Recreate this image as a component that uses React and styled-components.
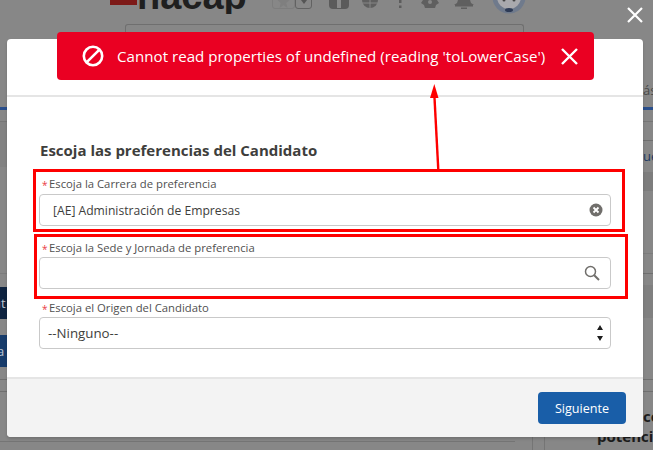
import React from "react";
import styled, { createGlobalStyle } from "styled-components";

const GlobalStyle = createGlobalStyle`
  html, body { margin: 0; padding: 0; background: #878787; }
  * { box-sizing: border-box; }
`;

const Page = styled.div`
  position: relative;
  width: 653px;
  height: 450px;
  overflow: hidden;
  background: #878787;
  font-family: "Open Sans", "Liberation Sans", sans-serif;
`;

// app behind the dimmed overlay
const Backdrop = styled.div`
  display: flex;
  flex-direction: column;
  height: 100%;
`;

const TopBar = styled.div`
  display: flex;
  align-items: flex-end;
  height: 14px;
  padding-left: 110px;
  overflow: hidden;
`;

const LogoMark = styled.div`
  flex: none;
  width: 27px;
  height: 5px;
  margin-bottom: 9px;
  background: #7d1a18;
`;

const LogoText = styled.div`
  flex: none;
  width: 108px;
  font-family: "Liberation Sans", sans-serif;
  font-weight: 700;
  font-size: 38px;
  line-height: 30px;
  height: 30px;
  margin-bottom: 3px;
  color: #1f1f1f;
`;

const FavGroup = styled.div`
  display: flex;
  margin: 0 0 5px 27px;
`;

const FavBox = styled.div`
  width: ${(p) => p.$w}px;
  height: 14px;
  border: 1px solid ${(p) => p.$line};
  border-radius: 0 0 3px 3px;
  display: flex;
  align-items: center;
  justify-content: center;
`;

const TopIcons = styled.svg`
  display: block;
  margin-left: 17px;
`;

const SearchBar = styled.div`
  flex: none;
  width: 399px;
  height: 20px;
  margin: 10px 0 0 125px;
  border: 1px solid #6f6f6f;
  border-bottom: 0;
  border-radius: 3px 3px 0 0;
`;

const BackBody = styled.div`
  flex: 1;
  display: flex;
  justify-content: space-between;
  margin-top: -4px;
  min-height: 0;
`;

const Strip = styled.div`
  width: ${(p) => p.$w}px;
  display: flex;
  flex-direction: column;
  overflow: hidden;
`;

const StripRow = styled.div`
  flex: none;
  height: ${(p) => p.$h}px;
  background: ${(p) => p.$bg || "transparent"};
  border-bottom: ${(p) => (p.$line ? `1px solid ${p.$line}` : "0")};
  color: ${(p) => p.$color || "#4a4a4a"};
  font-size: 13px;
  line-height: ${(p) => p.$lh || p.$h}px;
  padding-left: ${(p) => p.$pad || 0}px;
  margin-left: ${(p) => p.$shift || 0}px;
  white-space: nowrap;
`;

const BottomHeading = styled.div`
  font-weight: 700;
  font-size: 15px;
  line-height: 20px;
  color: #1c1c1c;
  white-space: nowrap;
  padding-top: 14px;
`;

const HeadingIndent = styled.div`
  padding-left: 46px;
`;

const BottomRule = styled.div`
  position: absolute;
  left: 0;
  top: 441px;
  width: 515px;
  height: 1px;
  background: #757575;
`;

const BottomColumn = styled.div`
  position: absolute;
  top: 437px;
  left: ${(p) => p.$x}px;
  width: 1px;
  height: 13px;
  background: #757575;
`;

const CloseOverlay = styled.svg`
  position: absolute;
  top: 7px;
  left: 627px;
`;

const Modal = styled.div`
  position: absolute;
  left: 7px;
  top: 39px;
  width: 636px;
  height: 398px;
  display: flex;
  flex-direction: column;
  background: #fff;
  border-radius: 4px;
  overflow: hidden;
  box-shadow: 0 2px 3px rgba(0, 0, 0, 0.16);
`;

const ModalHead = styled.div`
  flex: none;
  height: 58px;
  border-bottom: 2px solid #e5e5e5;
`;

const ModalBody = styled.div`
  flex: 1;
  padding: 43px 32px 0 32px;
`;

const Title = styled.h2`
  margin: 0 0 16px;
  padding-left: 1px;
  font-size: 15px;
  line-height: 20px;
  font-weight: 700;
  color: #3e3e3c;
`;

const Field = styled.div`
  margin-bottom: ${(p) => p.$after || 0}px;
`;

const Label = styled.div`
  display: flex;
  height: 18px;
  padding: ${(p) => p.$top ?? 1}px 0 0 3px;
  font-size: 11.3px;
  line-height: 16px;
  color: #505050;
`;

const Star = styled.span`
  width: 7px;
  font-size: 10px;
  padding-top: 1px;
  color: #ea3a44;
`;

const InputBox = styled.div`
  display: flex;
  align-items: center;
  justify-content: space-between;
  height: 32px;
  padding: 0 ${(p) => p.$right || 7}px 0 ${(p) => p.$left || 8}px;
  background: #fff;
  border: 1px solid #c9c9c9;
  border-radius: 4px;
  font-size: ${(p) => p.$size || 12.15}px;
  color: #3e3e3c;
`;

const ModalFoot = styled.div`
  flex: none;
  height: 60px;
  display: flex;
  align-items: flex-start;
  justify-content: flex-end;
  padding: 13px 17px 0 0;
  background: #f3f3f3;
  border-top: 2px solid #e5e5e5;
`;

const NextButton = styled.button`
  width: 88px;
  height: 32px;
  border: 0;
  border-radius: 4px;
  background: #195ea8;
  color: #fff;
  font-family: inherit;
  font-size: 12.6px;
`;

// error toast on top of the modal
const Toast = styled.div`
  position: absolute;
  left: 57px;
  top: 32px;
  width: 537px;
  height: 48px;
  display: flex;
  align-items: center;
  padding-left: 25px;
  background: #ea0022;
  border-radius: 4px;
  color: #fff;
  font-size: 15.1px;
  letter-spacing: 0.03px;
`;

const ToastText = styled.div`
  margin: 0 16px 0 13px;
  white-space: nowrap;
`;

// hand-drawn annotations over the screenshot
const RedBox = styled.div`
  position: absolute;
  left: ${(p) => p.$x}px;
  top: ${(p) => p.$y}px;
  width: ${(p) => p.$w}px;
  height: ${(p) => p.$h}px;
  border: 3px solid #fe0000;
`;

const Arrow = styled.svg`
  position: absolute;
  left: 424px;
  top: 80px;
`;

const App = () => {
  return (
    <Page>
      <GlobalStyle />
      <Backdrop>
        <TopBar>
          <LogoMark />
          <LogoText>nacap</LogoText>
          <FavGroup>
            <FavBox $w={23} $line="#7d7d7d">
              <svg width="13" height="12" viewBox="0 0 13 12"><path d="M6.5 -1l2 5h4l-3.2 3 1.2 5-4-2.8-4 2.8 1.2-5L.5 4h4z" fill="#7f7f7f" /></svg>
            </FavBox>
            <FavBox $w={17} $line="#626262">
              <svg width="8" height="6" viewBox="0 0 8 6"><path d="M1 1h6L4 5z" fill="#555" /></svg>
            </FavBox>
          </FavGroup>
          <TopIcons width="200" height="14" viewBox="0 0 200 14">
            <path d="M0 0h20v5a4 4 0 0 1-4 4H4a4 4 0 0 1-4-4z" fill="#5b5b5b" />
            <rect x="8" y="0" width="4" height="8" fill="#8a8a8a" />
            <path d="M33 0h16a8 8 0 0 1-16 0z" fill="#5f5f5f" />
            <path d="M41 0v8M33 3h16" stroke="#878787" strokeWidth="1" />
            <rect x="70" y="0" width="2.5" height="3" fill="#5c5c5c" />
            <rect x="70" y="5.5" width="2.5" height="2.5" fill="#5c5c5c" />
            <path d="M94 0h14l2 3-3 2-1 3h-10l-1-3-3-2z" fill="#5f5f5f" />
            <circle cx="101" cy="2" r="2" fill="#878787" />
            <path d="M129 0h12l1 3 3 2H125l3-2z" fill="#5f5f5f" />
            <rect x="126" y="5" width="18" height="1.5" fill="#5f5f5f" />
            <rect x="132" y="7.5" width="6" height="1.5" fill="#5f5f5f" />
            <circle cx="180" cy="-3" r="16.5" fill="#6f7a8c" />
            <circle cx="180" cy="-3" r="12" fill="#a9a9ad" />
            <ellipse cx="180" cy="10" rx="4" ry="2" fill="#2d3a55" />
            <circle cx="175" cy="0" r="1.5" fill="#444" />
            <circle cx="185" cy="0" r="1.5" fill="#444" />
          </TopIcons>
        </TopBar>
        <SearchBar />
        <BackBody>
          <Strip $w={7}>
            <StripRow $h={67} />
            <StripRow $h={3} $bg="#2a4f8c" />
            <StripRow $h={12} $line="#767676" />
            <StripRow $h={45} $bg="#828282" />
            <StripRow $h={107} $line="#7c7c7c" />
            <StripRow $h={13} />
            <StripRow $h={32} $bg="#0e2340" $color="#b9c2cf" $shift={-7}>ut</StripRow>
            <StripRow $h={16} />
            <StripRow $h={32} $bg="#173c6b" $color="#b9c2cf" $shift={-3}>a</StripRow>
            <StripRow $h={13} $line="#6f6f6f" />
            <StripRow $h={12} $line="#6f6f6f" />
          </Strip>
          <Strip $w={56}>
            <StripRow $h={67} $pad={46} $lh={100}>ás</StripRow>
            <StripRow $h={3} $bg="#2a4f8c" />
            <StripRow $h={12} $line="#767676" />
            <StripRow $h={19} $line="#6f6f6f" />
            <StripRow $h={31} $pad={46} $color="#203a63">ue</StripRow>
            <StripRow $h={19} $bg="#7d7d7d" />
            <StripRow $h={63} $line="#7c7c7c" />
            <StripRow $h={20} $line="#6f6f6f" />
            <StripRow $h={11} />
            <StripRow $h={33} $bg="#808080" />
            <StripRow $h={62} $line="#6f6f6f" />
            <StripRow $h={12} $line="#6f6f6f" />
            <BottomHeading>
              <HeadingIndent>con</HeadingIndent>
              potencial
            </BottomHeading>
          </Strip>
        </BackBody>
      </Backdrop>
      <BottomRule />
      <BottomColumn $x={532} />
      <BottomColumn $x={544} />

      <CloseOverlay width="16" height="16" viewBox="0 0 16 16">
        <path d="M1 1l14 14M15 1L1 15" stroke="#fff" strokeWidth="2.2" />
      </CloseOverlay>

      <Modal>
        <ModalHead />
        <ModalBody>
          <Title>Escoja las preferencias del Candidato</Title>
          <Field $after={13}>
            <Label $top={0}><Star>*</Star>Escoja la Carrera de preferencia</Label>
            <InputBox $left={13}>
              [AE] Administración de Empresas
              <svg width="14" height="14" viewBox="0 0 14 14">
                <circle cx="7" cy="7" r="6.5" fill="#706e6b" />
                <path d="M4.5 4.5l5 5M9.5 4.5l-5 5" stroke="#fff" strokeWidth="1.8" />
              </svg>
            </InputBox>
          </Field>
          <Field $after={10}>
            <Label><Star>*</Star>Escoja la Sede y Jornada de preferencia</Label>
            <InputBox $right={10}>
              <span />
              <svg width="16" height="16" viewBox="0 0 16 16" fill="none" stroke="#706e6b">
                <circle cx="6.5" cy="6.5" r="5" strokeWidth="1.5" />
                <path d="M10.2 10.2L15 15" strokeWidth="2" />
              </svg>
            </InputBox>
          </Field>
          <Field>
            <Label><Star>*</Star>Escoja el Origen del Candidato</Label>
            <InputBox $size={13.3}>
              --Ninguno--
              <svg width="6" height="16" viewBox="0 0 6 16">
                <path d="M3 0l3 5H0zM3 16l3-5H0z" fill="#1f1f1f" />
              </svg>
            </InputBox>
          </Field>
        </ModalBody>
        <ModalFoot>
          <NextButton>Siguiente</NextButton>
        </ModalFoot>
      </Modal>

      <RedBox $x={33} $y={169} $w={592} $h={63} />
      <RedBox $x={34} $y={234} $w={594} $h={65} />
      <Arrow width="24" height="92" viewBox="0 0 24 92">
        <path d="M10.3 4l4.2 14H6z" fill="#fe0000" />
        <path d="M10.3 14L14.3 90" stroke="#fe0000" strokeWidth="2.4" />
      </Arrow>

      <Toast>
        <svg width="22" height="22" viewBox="0 0 22 22" fill="none" stroke="#fff" strokeWidth="2.6">
          <circle cx="11" cy="11" r="9.2" />
          <path d="M4.8 17.2L17.2 4.8" />
        </svg>
        <ToastText>Cannot read properties of undefined (reading 'toLowerCase')</ToastText>
        <svg width="17" height="17" viewBox="0 0 17 17">
          <path d="M1 1l15 15M16 1L1 16" stroke="#fff" strokeWidth="2.4" />
        </svg>
      </Toast>
    </Page>
  );
};

export default App;
